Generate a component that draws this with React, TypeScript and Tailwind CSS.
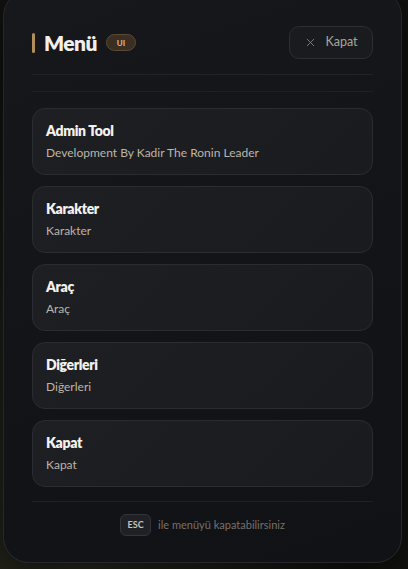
import { X } from "lucide-react";

const items = [
  { title: "Admin Tool", desc: "Development By Kadir The Ronin Leader" },
  { title: "Karakter", desc: "Karakter" },
  { title: "Araç", desc: "Araç" },
  { title: "Diğerleri", desc: "Diğerleri" },
  { title: "Kapat", desc: "Kapat" },
];

export default function App() {
  return (
    <main
      className="h-[569px] w-[408px] overflow-hidden bg-[radial-gradient(ellipse_at_20%_100%,#2a2a20_0%,#121210_60%)]"
      style={{ fontFamily: "Lato, 'Noto Sans', sans-serif" }}
    >
      <div className="ml-[3px] mr-[6px] -mt-[10px] h-[573px] rounded-[26px] border border-[#26272b] bg-[linear-gradient(160deg,#17181c_0%,#131418_50%,#111216_100%)] px-[28px] pt-[35px] shadow-[0_10px_40px_rgba(0,0,0,0.6)]">
        {/* header */}
        <div className="flex items-center justify-between border-b border-[#222327] pb-[15px]">
          <div className="flex items-center">
            <span className="h-[20px] w-[3px] rounded-full bg-[#b58c5c]" />
            <h1 className="ml-[9px] text-[21px] font-extrabold tracking-tight text-[#f1efeb]">Menü</h1>
            <span className="ml-[9px] flex h-[17px] w-[30px] items-center justify-center rounded-full border border-[#5b4a34] bg-[#3a2f22] text-[8px] font-black text-[#d6b07e]">
              UI
            </span>
          </div>
          <button className="flex h-[33px] w-[84px] items-center justify-center gap-[8px] rounded-[10px] border border-[#2d2e33] bg-[#1a1b1f] text-[12.5px] text-[#aaa59c]">
            <X size={13} strokeWidth={1.6} className="text-[#8a867f]" />
            Kapat
          </button>
        </div>

        {/* list */}
        <div className="mt-[16px] flex flex-col gap-[11px] border-t border-[#1f2024] pt-[16px]">
          {items.map((it) => (
            <div
              key={it.title}
              className="flex h-[67px] flex-col justify-center rounded-[13px] border border-[#2b2c31] bg-[linear-gradient(135deg,#1e1f23,#1a1b1f)] px-[13px] pb-[1px]"
            >
              <div className="text-[14px] font-extrabold tracking-tight text-[#f3f1ed]">{it.title}</div>
              <div className="mt-[3px] text-[12px] text-[#bcb5a9]">{it.desc}</div>
            </div>
          ))}
        </div>

        {/* footer */}
        <div className="mt-[14px] flex items-center justify-center gap-[7px] border-t border-[#202125] pt-[12px]">
          <span className="flex h-[22px] w-[31px] items-center justify-center rounded-[6px] border border-[#34353a] bg-[#202125] text-[9px] font-bold text-[#c8c2b8]">
            ESC
          </span>
          <span className="text-[11px] text-[#76716a]">ile menüyü kapatabilirsiniz</span>
        </div>
      </div>
    </main>
  );
}
